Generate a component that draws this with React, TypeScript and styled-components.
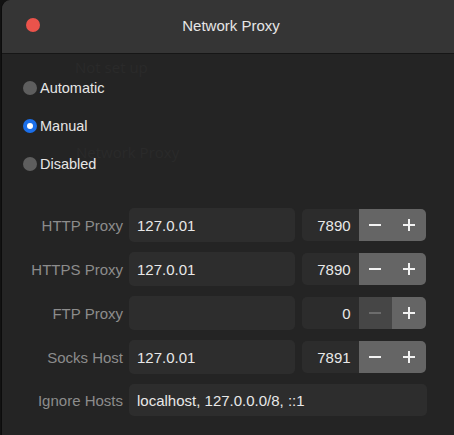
import React from "react";
import styled, { createGlobalStyle } from "styled-components";

const Global = createGlobalStyle`
  html, body { margin: 0; padding: 0; background: #121212; }
  body { font-family: "Liberation Sans", Arial, sans-serif; }
  * { box-sizing: border-box; }
`;

const Page = styled.div`
  width: 454px;
  height: 435px;
  overflow: hidden;
  padding-left: 1px;
`;

const Window = styled.div`
  width: 470px;
  height: 450px;
  background: #242424;
  border-left: 1px solid #0c0c0c;
  border-top-left-radius: 9px;
  overflow: hidden;
  display: flex;
  flex-direction: column;
  position: relative;
`;

const TitleBar = styled.div`
  height: 54px;
  flex: none;
  background: #353535;
  border-bottom: 1px solid #161616;
  display: flex;
  align-items: center;
  position: relative;
`;

const CloseDot = styled.div`
  position: absolute;
  left: 24px;
  top: 18px;
  width: 14px;
  height: 14px;
  border-radius: 50%;
  background: #eb534b;
`;

const Title = styled.div`
  width: 454px;
  text-align: center;
  color: #e6e6e6;
  font-size: 15px;
  margin-top: -3px;
  padding-left: 4px;
`;

const Body = styled.div`
  flex: 1;
  display: flex;
  flex-direction: column;
  position: relative;
`;

const Ghost = styled.div<{ $x: number; $y: number }>`
  position: absolute;
  left: ${(p) => p.$x}px;
  top: ${(p) => p.$y}px;
  color: #2a2a2a;
  font-size: 15px;
  font-family: "Open Sans", "Liberation Sans", sans-serif;
  pointer-events: none;
`;

const RadioGroup = styled.div`
  display: flex;
  flex-direction: column;
  padding: 15px 0 0 21px;
  position: relative;
`;

const RadioRow = styled.label`
  height: 38px;
  display: flex;
  align-items: center;
  gap: 3px;
  color: #e6e6e6;
  font-size: 14.5px;
`;

const RadioDot = styled.span<{ $on?: boolean }>`
  width: 14px;
  height: 14px;
  border-radius: 50%;
  background: ${(p) => (p.$on ? "#1b6fea" : "#5e5e5e")};
  display: flex;
  align-items: center;
  justify-content: center;
  &::after {
    content: "";
    width: 6px;
    height: 6px;
    border-radius: 50%;
    background: #ffffff;
    display: ${(p) => (p.$on ? "block" : "none")};
  }
`;

const Form = styled.div`
  margin-top: 25px;
  display: grid;
  grid-template-columns: 121px 166px 125px;
  column-gap: 6px;
  row-gap: 10px;
  align-items: center;
`;

const Label = styled.div`
  text-align: right;
  color: #8c8c8c;
  font-size: 15px;
`;

const TextField = styled.div<{ $wide?: boolean }>`
  height: ${(p) => (p.$wide ? 32 : 34)}px;
  background: #2d2d2d;
  border-radius: 5px;
  color: #e8e8e8;
  font-size: 15px;
  padding-left: 8px;
  display: flex;
  align-items: center;
  grid-column: ${(p) => (p.$wide ? "2 / span 2" : "auto")};
  margin-right: ${(p) => (p.$wide ? "-1px" : "0")};
`;

const Spin = styled.div`
  height: 32px;
  margin-left: 1px;
  display: flex;
  border-radius: 5px;
  overflow: hidden;
`;

const SpinValue = styled.div`
  width: 57px;
  background: #2c2c2c;
  color: #e8e8e8;
  font-size: 15px;
  display: flex;
  align-items: center;
  justify-content: flex-end;
  padding-right: 8px;
`;

const SpinBtn = styled.div<{ $disabled?: boolean }>`
  width: 34px;
  background: ${(p) => (p.$disabled ? "#464646" : "#656565")};
  color: ${(p) => (p.$disabled ? "#6c6c6c" : "#f2f2f2")};
  display: flex;
  align-items: center;
  justify-content: center;
`;

const Minus = () => (
  <svg width="12" height="12" viewBox="0 0 12 12">
    <rect x="0" y="5" width="12" height="2" fill="currentColor" />
  </svg>
);

const Plus = () => (
  <svg width="12" height="12" viewBox="0 0 12 12">
    <rect x="0" y="5" width="12" height="2" fill="currentColor" />
    <rect x="5" y="0" width="2" height="12" fill="currentColor" />
  </svg>
);

type Row = { label: string; host: string; port: string; minusDisabled?: boolean };

const rows: Row[] = [
  { label: "HTTP Proxy", host: "127.0.01", port: "7890" },
  { label: "HTTPS Proxy", host: "127.0.01", port: "7890" },
  { label: "FTP Proxy", host: "", port: "0", minusDisabled: true },
  { label: "Socks Host", host: "127.0.01", port: "7891" },
];

export default function App() {
  return (
    <Page>
      <Global />
      <Window>
        <TitleBar>
          <CloseDot />
          <Title>Network Proxy</Title>
        </TitleBar>
        <Body>
          <Ghost $x={73} $y={3}>Not set up</Ghost>
          <Ghost $x={74} $y={88}>Network Proxy</Ghost>
          <RadioGroup>
            <RadioRow><RadioDot />Automatic</RadioRow>
            <RadioRow><RadioDot $on />Manual</RadioRow>
            <RadioRow><RadioDot />Disabled</RadioRow>
          </RadioGroup>
          <Form>
            {rows.map((r) => (
              <React.Fragment key={r.label}>
                <Label>{r.label}</Label>
                <TextField>{r.host}</TextField>
                <Spin>
                  <SpinValue>{r.port}</SpinValue>
                  <SpinBtn $disabled={r.minusDisabled}><Minus /></SpinBtn>
                  <SpinBtn><Plus /></SpinBtn>
                </Spin>
              </React.Fragment>
            ))}
            <Label>Ignore Hosts</Label>
            <TextField $wide>localhost, 127.0.0.0/8, ::1</TextField>
          </Form>
        </Body>
      </Window>
    </Page>
  );
}
